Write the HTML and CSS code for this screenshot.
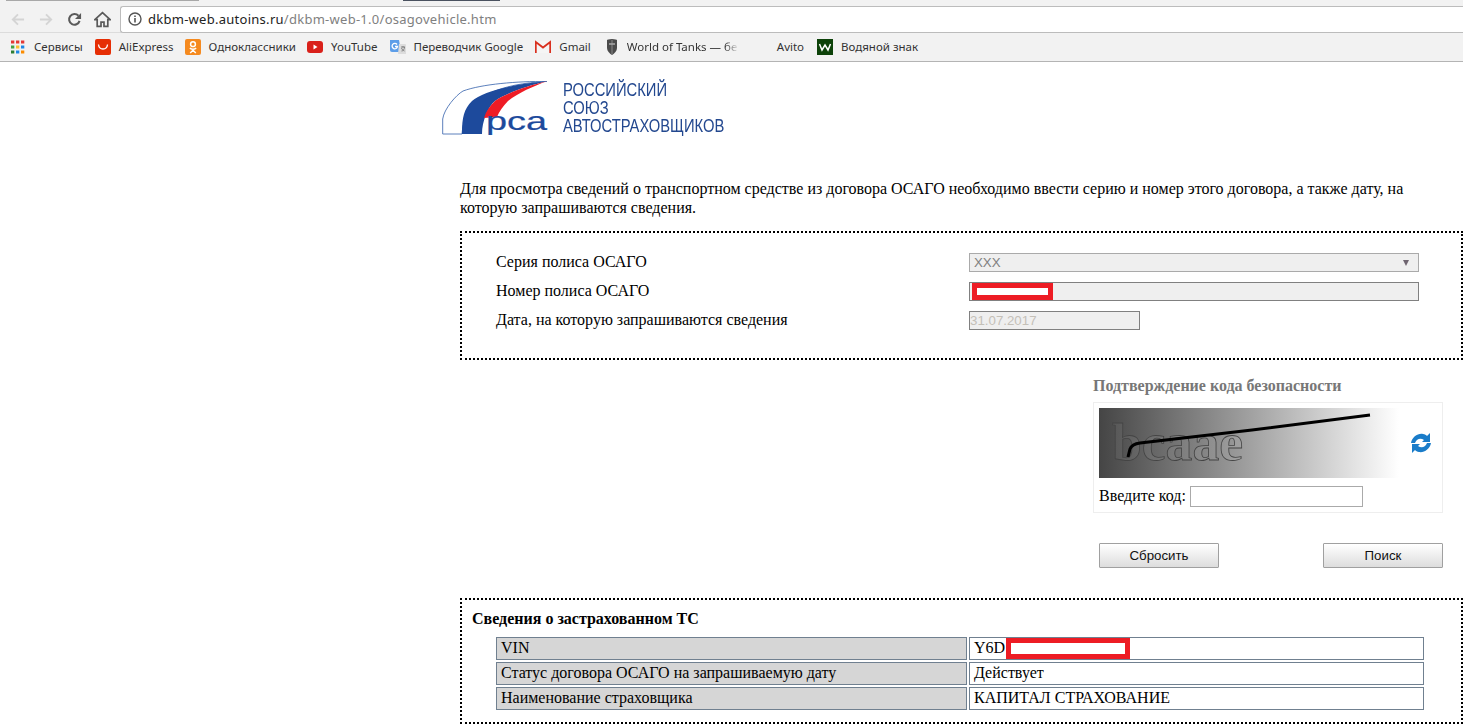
FILE: index.html
```html
<!DOCTYPE html>
<html lang="ru">
<head>
<meta charset="utf-8">
<title>ОСАГО</title>
<link rel="stylesheet" href="styles.css">
</head>
<body>
<header class="chrome">
  <div class="tabstrip"><span class="tab-edge"></span><span class="tab-dark"></span></div>
  <div class="toolbar">
    <svg class="nav" viewBox="0 0 16 16"><path d="M15 8H3M8.500 2.500 3 8l5.500 5.500" fill="none" stroke="#d4d4d4" stroke-width="2"/></svg>
    <svg class="nav" viewBox="0 0 16 16"><path d="M1 8h12M7.500 2.500 13 8l-5.500 5.500" fill="none" stroke="#d4d4d4" stroke-width="2"/></svg>
    <svg class="nav" viewBox="0 0 16 16"><path d="M13.400 9.500A5.700 5.700 0 1 1 12.200 4" fill="none" stroke="#5a5a5a" stroke-width="2.200"/><path d="M15 1v6.500H8.500z" fill="#5a5a5a"/></svg>
    <svg class="nav home" viewBox="0 0 16 16"><path d="M8 1.500.8 8.200h2.200v6.300h3.600v-4h2.800v4H13V8.200h2.200z" fill="none" stroke="#5a5a5a" stroke-width="1.600"/></svg>
    <div class="omnibox">
      <svg class="info" viewBox="0 0 14 14"><circle cx="7" cy="7" r="6" fill="none" stroke="#555" stroke-width="1.400"/><path d="M7 6v4.400M7 3.400v1.600" stroke="#555" stroke-width="1.600"/></svg>
      <span class="url"><b>dkbm-web.autoins.ru</b>/dkbm-web-1.0/osagovehicle.htm</span>
    </div>
  </div>
  <nav class="bookmarks">
    <a class="bm">
      <svg class="ic" viewBox="0 0 16 16"><g><rect x="1" y="1.500" width="3.300" height="3" fill="#e53935"/><rect x="6" y="1.500" width="3.300" height="3" fill="#e53935"/><rect x="11" y="1.500" width="3.300" height="3" fill="#e53935"/><rect x="1" y="6.500" width="3.300" height="3" fill="#43a047"/><rect x="6" y="6.500" width="3.300" height="3" fill="#fbc02d"/><rect x="11" y="6.500" width="3.300" height="3" fill="#1e88e5"/><rect x="1" y="11.500" width="3.300" height="3" fill="#2e7d32"/><rect x="6" y="11.500" width="3.300" height="3" fill="#1e88e5"/><rect x="11" y="11.500" width="3.300" height="3" fill="#fb8c00"/></g></svg>Сервисы</a>
    <a class="bm shift-1">
      <svg class="ic" viewBox="0 0 16 16"><rect width="16" height="16" rx="2" fill="#e62e04"/><path d="M3.500 5.500c.6 6 8.400 6 9 0" fill="none" stroke="#fff" stroke-width="1.300"/></svg>AliExpress</a>
    <a class="bm">
      <svg class="ic" viewBox="0 0 16 16"><rect width="16" height="16" rx="2" fill="#f58a1f"/><circle cx="8" cy="5.200" r="2.400" fill="none" stroke="#fff" stroke-width="1.500"/><path d="M4.800 9.200c2 1.300 4.400 1.300 6.400 0M8 10.200v1.300M5.200 14 8 11.300 10.800 14" fill="none" stroke="#fff" stroke-width="1.500"/></svg>Одноклассники</a>
    <a class="bm">
      <svg class="ic" viewBox="0 0 16 16"><rect x="0" y="2" width="16" height="12" rx="3" fill="#d9201a"/><path d="M6.500 5.500v5l4-2.500z" fill="#fff"/></svg>YouTube</a>
    <a class="bm shift-1">
      <svg class="ic" viewBox="0 0 16 16"><path d="M0 1h9l2 12H2a2 2 0 0 1-2-2z" fill="#5d9ee8"/><path d="M9 5h6a1 1 0 0 1 1 1v9H8z" fill="#dcdcdc"/><path d="M11 8h4M13 7v1.500M11.500 12c2 0 3-2 3-4M11.500 9c.5 1.500 1.500 2.500 3 3" fill="none" stroke="#777" stroke-width=".9"/><path d="M7 5.500a2.700 2.700 0 1 0 .5 2H5" fill="none" stroke="#fff" stroke-width="1.300"/></svg>Переводчик Google</a>
    <a class="bm shift-1">
      <svg class="ic" viewBox="0 0 16 16"><rect y="2" width="16" height="12" fill="#f5f5f5"/><path d="M.8 14V3l7.200 5.500L15.200 3v11" fill="none" stroke="#d9301f" stroke-width="1.800"/></svg>Gmail</a>
    <a class="bm wot shift-2">
      <svg class="ic" viewBox="0 0 16 16"><path d="M8 0C5 0 3 1 3 1v8c0 3 2.500 5.500 5 7 2.500-1.500 5-4 5-7V1s-2-1-5-1z" fill="#4b4b4b"/><path d="M8 1v14" stroke="#8a8a8a" stroke-width="1"/><path d="M5 5h6" stroke="#aaa" stroke-width="1.500"/></svg><span class="fade">World of Tanks — бе</span></a>
    <a class="bm"><span class="ic blank"></span>Avito</a>
    <a class="bm shift-2">
      <svg class="ic" viewBox="0 0 16 16"><rect width="16" height="16" fill="#0d4209"/><path d="M2.500 5 5 11l3-5 3 5 2.500-6" fill="none" stroke="#fff" stroke-width="1.500"/></svg>Водяной знак</a>
  </nav>
</header>

<main class="page">
  <div class="logo">
    <svg class="logo-mark" viewBox="0 0 110 56">
      <path d="M.7 53V38C2 28 14 14 21 10 40 3 75 .3 105 .3 60 3 22 14 20 53z" fill="#fff" stroke="#4a72b4" stroke-width=".9"/>
      <path d="M20 53C20 36 22 28 30 20 40 11 70 3 105 .3 85 5 65 12 53 20 46 26 40 40 40 53z" fill="#1d4a9c"/>
      <path d="M42 37C44 30 48 25 53 20 65 12 85 5 105 .3 92 5 76 12 66 20 61 25 57 31 55 36z" fill="#ee1c25"/>
      <text class="logo-abbr" x="44" y="49" textLength="61" lengthAdjust="spacingAndGlyphs">рса</text>
    </svg>
    <div class="logo-text">
      <span>РОССИЙСКИЙ</span>
      <span>СОЮЗ</span>
      <span>АВТОСТРАХОВЩИКОВ</span>
    </div>
  </div>

  <p class="intro">Для просмотра сведений о транспортном средстве из договора ОСАГО необходимо ввести серию и номер этого договора, а также дату, на которую запрашиваются сведения.</p>

  <section class="box form-box">
    <div class="form-grid">
      <label>Серия полиса ОСАГО</label>
      <div class="select"><span>XXX</span><i class="caret"></i></div>
      <label>Номер полиса ОСАГО</label>
      <div class="field"><input class="input full" type="text" disabled><span class="redact redact-num"></span></div>
      <label>Дата, на которую запрашиваются сведения</label>
      <div class="field"><input class="input date" type="text" disabled value="31.07.2017"></div>
    </div>
  </section>

  <section class="captcha">
    <h3 class="captcha-title">Подтверждение кода безопасности</h3>
    <div class="captcha-card">
      <div class="captcha-row">
        <svg class="captcha-img" viewBox="0 0 300 70">
          <defs><linearGradient id="cg"><stop offset="0" stop-color="#454545"/><stop offset=".5" stop-color="#a0a0a0"/><stop offset="1" stop-color="#fff"/></linearGradient></defs>
          <rect width="300" height="70" fill="url(#cg)"/>
          <text class="captcha-word" x="13" y="52" textLength="131" lengthAdjust="spacingAndGlyphs">bcaae</text>
          <path d="M29 49 31 41Q33 36 41 35L153 22 271 7" fill="none" stroke="#000" stroke-width="3"/>
        </svg>
        <svg class="refresh" viewBox="0 0 22 22"><path d="M1 11C2 5 8 1 13 2c2 .4 3 1 4 2l3-3v9h-8l2-2C11 6 7 6 5 11z" fill="#1a7cc9"/><path d="M21 11c-1 6-7 10-12 9-2-.4-3-1-4-2l-3 3v-9h8l-2 2c3 2 7 2 9-3z" fill="#1a7cc9"/></svg>
      </div>
      <div class="code-row"><label>Введите код:</label><input class="code-input" type="text"></div>
    </div>
    <div class="actions">
      <button class="btn" type="button">Сбросить</button>
      <button class="btn" type="button">Поиск</button>
    </div>
  </section>

  <section class="box result-box">
    <h4 class="result-title">Сведения о застрахованном ТС</h4>
    <table class="result">
      <tr><th>VIN</th><td class="vin">Y6D<span class="redact redact-vin"></span></td></tr>
      <tr><th>Статус договора ОСАГО на запрашиваемую дату</th><td>Действует</td></tr>
      <tr><th>Наименование страховщика</th><td>КАПИТАЛ СТРАХОВАНИЕ</td></tr>
    </table>
  </section>
</main>
</body>
</html>
```
FILE: styles.css
```css
* { box-sizing: border-box; }
html, body { margin: 0; padding: 0; height: 100%; overflow: hidden; background: #fff; }
body { font-family: "Liberation Serif", serif; font-size: 16px; color: #000; }

.chrome { height: 62px; background: #f2f2f2; border-bottom: 1px solid #b4b4b4; font-family: "Noto Sans", sans-serif; }
.tabstrip { height: 1px; display: flex; background: #f2f2f2; }
.tab-edge { width: 193px; margin-left: 6px; background: #a8a8a8; }
.tab-dark { width: 97px; margin-left: 204px; background: #4a5260; }
.toolbar { height: 31px; display: flex; align-items: center; padding-top: 6px; padding-left: 10px; }
.nav { width: 15px; height: 15px; margin-right: 13.5px; flex: none; }
.home { width: 17px; height: 17px; margin-right: 9.5px; margin-left: -2px; }
.omnibox { flex: 1; height: 27px; display: flex; align-items: center; background: #fff; border: 1px solid #bcbcbc; border-right: 0; border-radius: 3px 0 0 3px; padding: 0 0 2px 7px; }
.info { width: 14px; height: 14px; margin-right: 6px; flex: none; }
.url { font-size: 13px; letter-spacing: .27px; color: #808080; white-space: nowrap; }
.url b { font-weight: 400; color: #222; }

.bookmarks { height: 29px; border-top: 1px solid #dcdcdc; display: flex; align-items: center; padding: 0 0 2px 10px; gap: 11px; font-size: 11.5px; color: #333; white-space: nowrap; }
.bm { display: flex; align-items: center; gap: 8px; }
.shift-1 { margin-left: 1px; }
.shift-2 { margin-left: 2px; }
.ic { width: 16px; height: 16px; flex: none; display: block; transform: translateY(1px); }
.wot { gap: 7px; }
.fade { width: 115px; -webkit-mask-image: linear-gradient(90deg, #000 85%, transparent 97%); mask-image: linear-gradient(90deg, #000 85%, transparent 97%); }

.page { margin-left: 460px; }
.logo { display: flex; margin: 19px 0 0 -18px; height: 54px; }
.logo-mark { width: 110px; height: 56px; flex: none; }
.logo-abbr { font-family: "Liberation Sans", sans-serif; font-size: 25px; fill: #1d4a9c; stroke: #1d4a9c; stroke-width: .2; }
.logo-text { margin-left: 11px; display: flex; flex-direction: column; font-family: "Liberation Sans", sans-serif; font-size: 18px; line-height: 18px; color: #23488f; transform: scaleX(.82); transform-origin: left top; }
.intro { margin: 44px 0 14px; line-height: 19px; }

.box { border: 2px dotted #000; }
.form-box { height: 129px; padding: 20px 0 0 34px; }
.form-grid { display: grid; grid-template-columns: 473px 450px; grid-auto-rows: 29px; }
.form-grid label { line-height: 18px; }
.select { height: 19px; display: flex; align-items: center; justify-content: space-between; padding: 0 9px 0 4px; background: #efefef; border: 1px solid #aaa; font-family: "Liberation Sans", sans-serif; font-size: 13.3px; color: #808080; }
.caret { width: 0; height: 0; border: 3px solid transparent; border-top: 6px solid #6f6570; border-bottom: 0; }
.field { position: relative; }
.input { display: block; height: 19px; padding: 0; background: #efefef; border: 1px solid #808080; font-family: "Liberation Sans", sans-serif; font-size: 13.3px; color: #c4c0b8; }
.input:disabled { color: #c4c0b8; }
.full { width: 450px; }
.date { width: 171px; }
.redact { position: absolute; border: 5px solid #ed1c24; background: #fff; }
.redact-num { left: 3px; top: 1px; width: 81px; height: 17px; }

.captcha { margin: 0 0 0 633px; width: 350px; }
.captcha-title { margin: 0; padding-top: 17px; height: 42px; font-size: 16px; line-height: 18px; font-weight: 700; color: #777; }
.captcha-card { height: 111px; border: 1px solid #eee; padding: 5px; }
.captcha-row { display: flex; align-items: center; }
.captcha-img { width: 300px; height: 70px; display: block; flex: none; }
.captcha-word { font-family: "Liberation Serif", serif; font-size: 53px; font-weight: 700; fill: rgba(255,255,255,.06); stroke: #444; stroke-width: .8; }
.refresh { width: 22px; height: 22px; margin-left: 11px; }
.code-row { display: flex; align-items: center; margin-top: 8px; }
.code-row label { margin-bottom: 2px; }
.code-input { width: 173px; height: 21px; margin-left: 4px; border: 1px solid #aaa; background: #fff; padding: 0; }
.actions { display: flex; justify-content: space-between; padding-left: 6px; margin-top: 30px; }
.btn { width: 120px; height: 25px; padding: 0; border: 1px solid #a0a0a0; border-radius: 1px; background: linear-gradient(#fff, #ddd); font-family: "Liberation Sans", sans-serif; font-size: 13.3px; color: #111; }

.result-box { margin-top: 30px; height: 126px; padding: 10px 0 0 10px; }
.result-title { margin: 0 0 7px; font-size: 16px; line-height: 18px; font-weight: 700; }
.result { margin-left: 22px; border-collapse: separate; border-spacing: 2px; width: 932px; table-layout: fixed; }
.result th, .result td { height: 23px; padding: 0 4px 2px; border: 1px solid #708090; font-weight: 400; text-align: left; line-height: 19px; }
.result th { width: 471px; background: #d6d6d6; }
.vin { position: relative; }
.redact-vin { left: 36px; top: 0; width: 124px; height: 21px; }
```
